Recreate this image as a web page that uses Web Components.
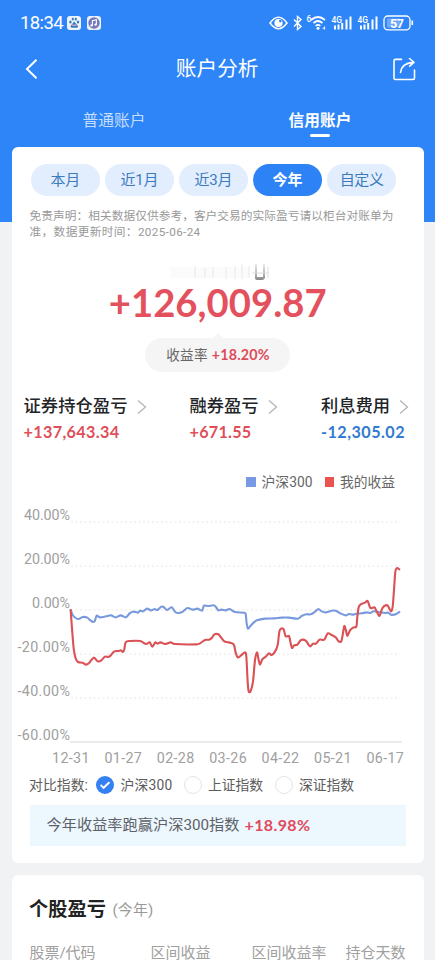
<!DOCTYPE html>
<html lang="zh-CN">
<head>
<meta charset="utf-8">
<title>账户分析</title>
<style>
html,body{margin:0;height:960px;overflow:hidden}
body{font-family:Roboto,"Noto Sans CJK SC",sans-serif;background:#f0f2f5}
</style>
</head>
<body>
<account-page></account-page>
<script>
const define = (name, html, setup) => customElements.define(name, class extends HTMLElement {
  constructor() {
    super();
    const t = document.createElement('template');
    t.innerHTML = html;
    this.attachShadow({mode: 'open'}).append(t.content.cloneNode(true));
  }
  connectedCallback() { if (setup) setup(this, this.shadowRoot); }
});

/* Single-line label: s = size, w = width to fill, b = weight, c = colour */
define('text-label', `<style>:host{display:block;flex:none;white-space:nowrap}span{display:inline-block}</style><span><slot></slot></span>`, (el, root) => {
  const span = root.querySelector('span'), a = n => el.getAttribute(n);
  if (a('s')) el.style.fontSize = a('s') + 'px';
  if (a('b')) el.style.fontWeight = a('b');
  if (a('c')) el.style.color = a('c');
  if (a('f')) el.style.fontFamily = a('f') + ',"Noto Sans CJK SC",sans-serif';
  if (a('w')) {
    const w = +a('w'), n = el.textContent.length;
    span.style.letterSpacing = ((w - span.getBoundingClientRect().width) / n) + 'px';
    el.style.width = w + 'px';
  }
});

define('status-bar', `<style>
:host{display:flex;height:46px;box-sizing:border-box;padding:0 20px;align-items:center;color:#fff}
.sp{flex:1}svg{display:block;flex:none}
</style>
<text-label s="18.5" w="43" f="Roboto">18:34</text-label>
<svg width="36" height="16" viewBox="0 0 36 16" style="margin-left:4px">
 <rect x="0" y="1" width="14" height="14" rx="3" fill="#eef4fb"/>
 <g fill="#397cc2"><ellipse cx="3.4" cy="7" rx="1.2" ry="1.6"/><ellipse cx="5.8" cy="4" rx="1.1" ry="1.6"/><ellipse cx="8.8" cy="4" rx="1.1" ry="1.6"/><ellipse cx="11" cy="7" rx="1.2" ry="1.6"/><path d="M7.2 6.5 11 11q.4 2-1.6 1.8H5q-2-.2-1.3-2z"/></g><path d="M5 10.2h4.6" stroke="#d8a5bd" stroke-width="1.4"/>
 <rect x="20" y="1" width="14" height="14" rx="3" fill="#eef0fb"/><circle cx="27" cy="8" r="5.7" fill="#7279bd"/>
 <path d="M25.4 10.4V5.6l4-.9v4.8" fill="none" stroke="#fff" stroke-width="1.1"/><circle cx="24.6" cy="10.4" r="1.2" fill="#fff"/><circle cx="28.6" cy="9.6" r="1.2" fill="#fff"/>
</svg><div class="sp"></div>
<svg width="146" height="20" viewBox="269 12.5 146 20" fill="none" stroke="#fff">
 <path d="M270 22.5q8.500-11.500 17.000 0q-8.500 11.500-17.000 0z" stroke-width="1.500"/><circle cx="278.500" cy="22.500" r="4.100" fill="#fff" stroke="none"/><circle cx="280.300" cy="20.600" r="1.300" fill="#3085f8" stroke="none"/>
 <path d="m294 19 7.000 7-3.500 3V16l3.500 3-7.000 7" stroke-width="1.400"/>
 <path d="M311 19.500q7-6 14 0M313.500 22.500q4.500-4 9 0" stroke-width="1.700"/><path d="M315.600 25.400q2.400-2 4.800 0" stroke-width="1.500"/><circle cx="318" cy="27.700" r="1.500" fill="#fff" stroke="none"/><path d="M322.600 27.700h1.500M324.600 26v3" stroke-width="1"/>
 <g fill="#fff" stroke="none" font-family="Roboto,sans-serif" font-weight="500"><text x="306.500" y="21.500" font-size="8.500">6</text><text x="331.500" y="22" font-size="8.800" textLength="10.500" lengthAdjust="spacingAndGlyphs">4G</text><text x="357.500" y="22" font-size="8.800" textLength="10.500" lengthAdjust="spacingAndGlyphs">4G</text></g>
 <path d="M335 25v4M338.500 24v5M342.200 22.500V29M346.500 19V29M350.500 16V29M361 25v4M364.500 24v5M368.200 22.500V29M372.500 19V29M376.500 16V29" stroke-width="2"/>
 <rect x="384" y="15.500" width="26" height="13.800" rx="3.800" stroke-width="1.300"/><path d="M412.300 20v4.500" stroke-width="1.600"/><path d="M387 18h13v9h-13z" fill="#70a9fb" stroke="none"/>
 <text x="390" y="27" font-family="Roboto,sans-serif" font-size="12.500" font-weight="700" fill="#fff" stroke="none" textLength="14">57</text>
</svg>`);

define('nav-bar', `<style>
:host{display:grid;grid-template-columns:1fr auto 1fr;align-items:center;height:46px;padding:0 19px 0 24px;color:#fff}svg{display:block}.r{justify-self:end}
text-label{line-height:46px}
</style>
<svg width="16" height="22" viewBox="0 0 16 22" fill="none" stroke="#fff" stroke-width="2"><path d="M12.500 1.800 3 11l9.500 9.200"/></svg>
<text-label s="20.7" w="84" b="400" style="margin-right:4.5px"><slot></slot></text-label>
<svg class="r" width="24" height="24" viewBox="0 0 24 24" fill="none" stroke="#fff" stroke-width="1.600" stroke-linecap="round" stroke-linejoin="round"><path d="M9.500 2.400H3.500q-1.500 0-1.500 1.500V21q0 1.500 1.500 1.500H21q1.500 0 1.500-1.500V13"/><path d="M8.500 15.500Q9.500 6.500 21 5.400M17.500 1.500l4.500 3.800-4.400 3.800"/></svg>`);

define('account-tabs', `<style>
:host{display:grid;grid-template-columns:206px 206px;padding:0 12px 0 11px;height:54.500px;color:#fff}
div{display:flex;flex-direction:column;align-items:center;line-height:24px;padding-top:17px}
.a{color:#c5defd}.on:after{content:"";width:19.500px;height:3px;border-radius:2px;background:#fff;margin-top:.5px}
</style><div class="a"><text-label s="15.7" w="63">普通账户</text-label></div><div class="on"><text-label s="15.7" w="63" b="700">信用账户</text-label></div>`);

define('panel-card', `<style>:host{display:block;background:#fff;border-radius:6px;margin:0 11.500px 0 12px;box-sizing:border-box}</style><slot></slot>`);

define('range-pill', `<style>:host{display:flex;justify-content:center;align-items:center;width:68.600px;height:32.600px;border-radius:17px;background:#e2edfe;color:#3c7cbd;line-height:32px}
:host([active]){background:#2d82f5;color:#fff;font-weight:700}</style><slot></slot>`);

define('profit-item', `<style>:host{display:block}.h{display:flex;align-items:center;height:26px;line-height:26px;color:#222427}svg{margin-left:9px;margin-top:1px}.v{line-height:25px}</style>
<div class="h"><slot name="title"></slot><svg width="10" height="16" viewBox="0 0 10 16" fill="none" stroke="#b5b5b5" stroke-width="1.300"><path d="m1 1.500 7.500 6.500L1 14.500"/></svg></div><div class="v"><slot></slot></div>`);

define('legend-key', `<style>:host{display:flex;align-items:center;line-height:22px;color:#666}i{width:9.500px;height:9.500px;margin-right:6px;background:var(--key)}</style><i></i><slot></slot>`);

define('return-chart', `<style>:host{display:block;height:275px}svg{display:block}text{font:14.3px Roboto,sans-serif;fill:#a0a0a0}</style>
<svg width="412" height="275" viewBox="12 495 412 275"><g class="grid"></g><g class="axis"></g>
<g transform="translate(0 500) scale(.33333)" fill="none" stroke-width="6.300" stroke-linecap="round" stroke-linejoin="round"><path class="b" stroke="#7899dd"/><path class="r" stroke="#da5156"/></g></svg>`, (el, root) => {
  const smooth = (a, b) => {
    const p = (a + ' ' + b).trim().split(/\s+/).map(s => s.split(',').map(Number));
    const split = a.trim().split(/\s+/).length;
    for (let i = split; i < p.length; i++) p[i][0] += 645;
    let d = `M${p[0]}`;
    for (let i = 0; i < p.length - 1; i++) {
      const q = p[Math.max(0, i - 1)], u = p[i], v = p[i + 1], w = p[Math.min(p.length - 1, i + 2)];
      const k = 7;
      d += `C${u[0] + (v[0] - q[0]) / k},${u[1] + (v[1] - q[1]) / k} ${v[0] - (w[0] - u[0]) / k},${v[1] - (w[1] - u[1]) / k} ${v[0]},${v[1]}`;
    }
    return d;
  };
  root.querySelector('.b').setAttribute('d', smooth(
    '212,330 218,345 227,354 236,357 248,351 262,353 272,362 281,366 285,362 290,347 300,352 318,349 333,346 347,352 362,346 378,352 388,341 398,335 408,336 414,338 420,332 430,334 441,326 453,331 464,327 472,330 484,320 491,321 501,330 515,322 527,337 545,337 562,324 578,329 592,326 606,332 612,317 625,318 641,316 648,321',
    '10,331 20,329 32,331 44,327 60,336 86,338 92,342 95,370 99,386 106,378 116,368 126,361 150,356 178,355 200,353 222,353 249,356 260,348 275,343 287,343 300,335 310,327 320,334 332,337 350,332 362,332 378,341 392,346 402,342 412,344 425,341 440,340 456,337 466,339 476,334 490,336 510,339 520,338 528,344 542,343 553,336'));
  root.querySelector('.r').setAttribute('d', smooth(
    '212,330 216,385 221,445 227,475 234,486 248,488 258,494 268,488 281,473 293,484 303,482 315,470 328,470 342,455 355,453 363,451 369,456 373,448 377,427 390,423 420,423 438,432 449,427 457,440 466,427 472,431 482,427 495,432 512,427 526,432 588,433 600,430 615,420 627,419 636,413 643,403',
    '10,403 18,412 28,424 40,427 56,433 62,458 68,472 76,468 90,457 94,470 98,545 101,574 107,573 114,545 120,480 126,457 130,475 135,494 142,478 152,470 162,460 170,465 180,455 188,435 193,395 198,386 206,388 212,409 222,408 226,425 231,444 237,436 247,434 258,420 272,422 285,439 294,431 303,431 314,419 328,419 338,400 350,405 362,412 371,424 379,424 383,405 388,378 393,392 397,408 405,391 416,382 424,380 427,350 431,322 437,313 450,308 458,303 466,324 478,322 484,332 493,348 502,325 512,316 519,318 528,334 533,320 537,270 541,215 546,204 553,208'));
  let grid = '', axis = '';
  [['40.00%', 46], ['20.00%', 46], ['0.00%', 38], ['-20.00%', 52.5], ['-40.00%', 52.5], ['-60.00%', 52.5]].forEach(([t, w], i) => {
    const y = 522 + i * 44;
    grid += i < 5 ? `<path d="M71 ${y}H400" stroke="#e6e6e6" stroke-dasharray="2 2.500"/>` : `<path d="M70 ${y}H402" stroke="#e2e4e6" stroke-width="1.300"/>`;
    axis += `<text x="${70 - w}" y="${y - 2}" textLength="${w}">${t}</text>`;
  });
  ['12-31', '01-27', '02-28', '03-26', '04-22', '05-21', '06-17'].forEach((t, i) => axis += `<text x="${52 + i * 52.4}" y="762.500" textLength="37.500">${t}</text>`);
  root.querySelector('.grid').innerHTML = grid;
  root.querySelector('.axis').innerHTML = axis;
});

define('index-option', `<style>:host{display:flex;align-items:center;color:#5c5c5c}i{box-sizing:border-box;width:18px;height:18px;border-radius:50%;border:1px solid #e2e4e5;margin-right:6.5px}:host([checked]) i{border:0;background:#3580f2}svg{display:none}:host([checked]) svg{display:block}</style>
<i><svg width="18" height="18" viewBox="0 0 18 18" fill="none" stroke="#fff" stroke-width="1.900"><path d="m4.600 8.800 3 3 5.800-5.600"/></svg></i><slot></slot>`);

define('account-page', `<style>
:host{display:block;height:960px;overflow:hidden;background:radial-gradient(ellipse 540px 10px at 218px 213px,#2e85f8 97%,transparent 100%) no-repeat,linear-gradient(#2e85f8 213px,#f0f2f4 213px)}
.pills{display:flex;gap:5.500px;padding:17px 0 0 19px}
.note{color:#999;line-height:16px;padding:12px 0 0 17.500px}
.ghost{display:block;margin:23px 0 0 153px}
.total{display:flex;justify-content:center;line-height:42px;height:42px;margin:0;color:#e4515e}
.rate{display:flex;justify-content:center;margin-top:14.500px}
.bubble{position:relative;display:flex;box-sizing:border-box;width:145px;height:34px;border-radius:17px;background:#f5f5f5;padding-left:21px;gap:4px;align-items:center;line-height:34px;color:#666}
.bubble:before{content:"";position:absolute;left:67px;top:-5px;border:6px solid transparent;border-top:0;border-bottom-color:#f5f5f5}
.items{display:grid;grid-template-columns:166px 131.500px 1fr;padding:21.500px 0 0 11.500px}
.legend{display:flex;justify-content:flex-end;gap:12px;padding:27px 28.500px 0 0;height:22px}
return-chart{margin-top:1.500px}
.compare{display:flex;align-items:center;height:28px;padding-left:17px;margin-top:1px;line-height:28px;color:#5c5c5c}
.beat{display:flex;align-items:center;height:40.500px;line-height:40px;background:#edf7fe;margin:6.500px 17.500px 0;padding-left:17px;gap:5px;color:#5d6268}
.sub{display:flex;align-items:center;height:40px;line-height:40px;padding:15px 0 0 17px;gap:6.500px}
.cols{display:grid;grid-template-columns:121px 101px 94px auto;padding:9.500px 0 0 17.500px;line-height:26px;color:#a0a0a0}
</style>
<status-bar></status-bar><nav-bar>账户分析</nav-bar><account-tabs></account-tabs>
<panel-card style="height:716.500px">
 <div class="pills"><range-pill><text-label s="15" w="29.5">本月</text-label></range-pill><range-pill><text-label s="15" w="38">近1月</text-label></range-pill><range-pill><text-label s="15" w="38">近3月</text-label></range-pill><range-pill active><text-label s="15" w="30">今年</text-label></range-pill><range-pill><text-label s="15" w="44">自定义</text-label></range-pill></div>
 <div class="note"><text-label s="11.7" w="364">免责声明：相关数据仅供参考，客户交易的实际盈亏请以柜台对账单为</text-label><text-label s="11.7" w="171">准，数据更新时间：2025-06-24</text-label></div>
 <svg class="ghost" width="110" height="18" viewBox="165 263 110 18"><defs><filter id="soft"><feGaussianBlur stdDeviation=".7"/></filter><linearGradient id="fade" x2="0" y2="1"><stop stop-color="#777" stop-opacity=".15"/><stop offset="1" stop-color="#555" stop-opacity=".7"/></linearGradient></defs><g filter="url(#soft)"><path d="M170 267h80v11h-80z" fill="#fbfbfb"/><path d="M195 266v12M205 268v10M213 267v11M226 267v12M235 266v13M242 264v15M249 266v11" stroke="#f0f0f0" stroke-width="1.500"/><path d="M255 264h2v13h6v-13h2v14q-1 2-3 2h-4q-3 0-3-2z" fill="url(#fade)"/><path d="M252 273h17M268 267v11" stroke="#ddd"/></g></svg>
 <div class="total"><text-label s="38.2" w="218" b="700" f="Lato">+126,009.87</text-label></div>
 <div class="rate"><div class="bubble"><text-label s="13.6" w="41.5">收益率</text-label><text-label s="14.3" w="58" b="700" f="Lato" c="#dc4c5d">+18.20%</text-label></div></div>
 <div class="items">
  <profit-item><text-label slot="title" s="17.3" w="104" b="500">证券持仓盈亏</text-label><text-label s="16.2" w="96" b="700" f="Lato" c="#df4f59">+137,643.34</text-label></profit-item>
  <profit-item><text-label slot="title" s="17.3" w="69" b="500">融券盈亏</text-label><text-label s="16.2" w="62" b="700" f="Lato" c="#df4f59">+671.55</text-label></profit-item>
  <profit-item><text-label slot="title" s="17.3" w="69" b="500">利息费用</text-label><text-label s="16.2" w="84" b="700" f="Lato" c="#327bd0">-12,305.02</text-label></profit-item>
 </div>
 <div class="legend"><legend-key style="--key:#7899e5"><text-label s="13.8" w="51">沪深300</text-label></legend-key><legend-key style="--key:#e95450"><text-label s="13.8" w="55">我的收益</text-label></legend-key></div>
 <return-chart></return-chart>
 <div class="compare"><text-label s="13.8" w="59">对比指数:</text-label><index-option checked style="margin-left:8px"><text-label s="13.8" w="52">沪深300</text-label></index-option><index-option style="margin-left:11px"><text-label s="13.8" w="55">上证指数</text-label></index-option><index-option style="margin-left:11.500px"><text-label s="13.8" w="55">深证指数</text-label></index-option></div>
 <div class="beat"><text-label s="15.2" w="193">今年收益率跑赢沪深300指数</text-label><text-label s="16" w="66" b="700" f="Lato" c="#e04a5b">+18.98%</text-label></div>
</panel-card>
<panel-card style="height:110px;margin-top:12px">
 <div class="sub"><text-label s="19.2" w="77" b="700" c="#222">个股盈亏</text-label><text-label s="15" w="41" c="#9a9a9a">(今年)</text-label></div>
 <div class="cols"><text-label s="15" w="66">股票/代码</text-label><text-label s="15" w="60">区间收益</text-label><text-label s="15" w="75">区间收益率</text-label><text-label s="15" w="60">持仓天数</text-label></div>
</panel-card>`);
</script>
</body>
</html>
